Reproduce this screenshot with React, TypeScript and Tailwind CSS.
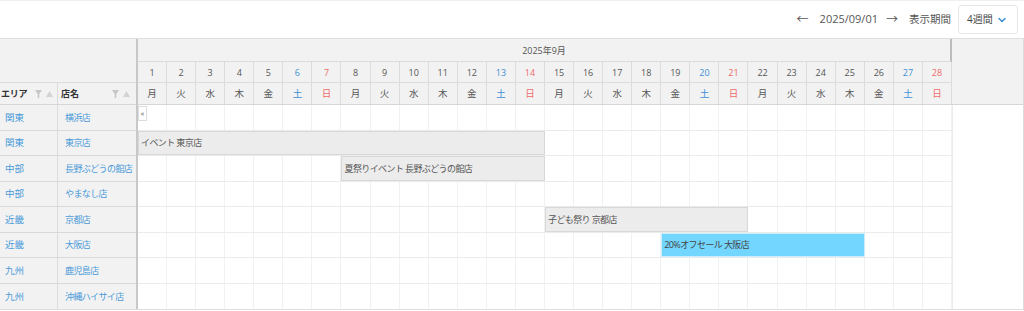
import { ChevronDown } from 'lucide-react'

const weekdays = ['月', '火', '水', '木', '金', '土', '日']
const days = Array.from({ length: 28 }, (_, i) => i + 1)

const stores = [
  { area: '関東', name: '横浜店' },
  { area: '関東', name: '東京店' },
  { area: '中部', name: '長野ぶどうの館店' },
  { area: '中部', name: 'やまなし店' },
  { area: '近畿', name: '京都店' },
  { area: '近畿', name: '大阪店' },
  { area: '九州', name: '鹿児島店' },
  { area: '九州', name: '沖縄ハイサイ店' },
]

// events keyed by row index; spans written out so tailwind picks them up
const events: Record<number, { label: string; span: string; tone: string }> = {
  1: { label: 'イベント 東京店', span: 'col-start-1 col-end-15', tone: 'bg-[#ececec] border-[#d8d8d8] text-[#555]' },
  2: { label: '夏祭りイベント 長野ぶどうの館店', span: 'col-start-8 col-end-15', tone: 'bg-[#ececec] border-[#d8d8d8] text-[#555]' },
  4: { label: '子ども祭り 京都店', span: 'col-start-15 col-end-22', tone: 'bg-[#ececec] border-[#d8d8d8] text-[#555]' },
  5: { label: '20%オフセール 大阪店', span: 'col-start-19 col-end-26', tone: 'bg-[#72d6ff] border-[#c8eefc] text-[#444]' },
}

function dayColor(i: number) {
  const w = (i - 1) % 7
  if (w === 5) return 'text-[#3d8fd6]'
  if (w === 6) return 'text-[#f06a6a]'
  return 'text-[#555]'
}

function Funnel() {
  return (
    <svg width="7" height="8" viewBox="0 0 7 8" className="shrink-0">
      <polygon points="0,0 7,0 4.3,4 4.3,8 2.7,8 2.7,4" fill="#c6c6c6" />
    </svg>
  )
}

function SortUp() {
  return (
    <svg width="7" height="6" viewBox="0 0 7 6" className="shrink-0">
      <polygon points="3.5,0 7,6 0,6" fill="#d2d2d2" />
    </svg>
  )
}

export default function App() {
  return (
    <div className="w-[1024px] h-[311px] bg-white border-t border-[#efefef] overflow-hidden font-['Open_Sans','Noto_Sans_CJK_JP',sans-serif]">
      {/* Top bar */}
      <div className="h-[37px] flex items-center justify-end pr-[6px] text-[#555]">
        <span className="text-[12px] mr-[11px]">←</span>
        <span className="text-[11px] mr-[8px]">2025/09/01</span>
        <span className="text-[12px] mr-[11px]">→</span>
        <span className="text-[10.5px] mr-[7px]">表示期間</span>
        <button className="h-[29px] w-[60px] flex items-center justify-between pl-[8px] pr-[9px] border border-[#e6e6e6] rounded-[3px] bg-white text-[10px] text-[#444]">
          4週間
          <ChevronDown size={12} strokeWidth={3} className="text-[#3d8fd6]" />
        </button>
      </div>

      {/* Table */}
      <div className="flex border-t border-b border-[#dedede] text-[9px] leading-none">
        {/* Left pane */}
        <div className="w-[138px] shrink-0 border-r-2 border-[#c8c8c8] bg-[#f2f2f2]">
          <div className="h-[44px] border-b border-[#dcdcdc]" />
          <div className="h-[22px] flex border-b border-[#d6d6d6] font-bold text-[#333]">
            <div className="w-[58px] flex items-center pl-[1px] pr-[4px] border-r border-[#dcdcdc]">
              <span className="flex-1 tracking-[-0.3px]">エリア</span>
              <Funnel />
              <span className="w-[4px]" />
              <SortUp />
            </div>
            <div className="flex-1 flex items-center pl-[3px] pr-[6px]">
              <span className="flex-1">店名</span>
              <Funnel />
              <span className="w-[4px]" />
              <SortUp />
            </div>
          </div>
          {stores.map((s, i) => (
            <div key={i} className="h-[25.5px] flex border-b border-[#d8d8d8] text-[#4a9ad9] last:border-b-0">
              <div className="w-[58px] flex items-center pl-[5px] border-r border-[#dcdcdc] text-[9.5px]">{s.area}</div>
              <div className="flex-1 flex items-center pl-[7px] whitespace-nowrap tracking-[-0.6px]">{s.name}</div>
            </div>
          ))}
        </div>

        {/* Calendar pane */}
        <div className="flex-1 flex flex-col">
          <div className="flex bg-[#f2f2f2]">
            <div className="w-[814px] shrink-0">
              <div className="h-[23px] flex items-center justify-center border-b border-r-2 border-[#dcdcdc] border-r-[#bdbdbd] text-[#555]">
                2025年9月
              </div>
              <div className="grid grid-cols-28 h-[21px] border-b border-[#dcdcdc]">
                {days.map((d) => (
                  <div key={d} className={`flex items-center justify-center border-r border-[#dcdcdc] ${dayColor(d)}`}>
                    {d}
                  </div>
                ))}
              </div>
              <div className="grid grid-cols-28 h-[22px] border-b border-[#d6d6d6] text-[9.5px]">
                {days.map((d) => (
                  <div key={d} className={`flex items-center justify-center border-r border-[#dcdcdc] ${dayColor(d)}`}>
                    {weekdays[(d - 1) % 7]}
                  </div>
                ))}
              </div>
            </div>
            <div className="flex-1 border-r border-b border-[#dcdcdc] border-b-[#d6d6d6]" />
          </div>

          <div className="flex">
            <div className="w-[814px] shrink-0">
              {stores.map((_, r) => {
                const ev = events[r]
                return (
                  <div key={r} className="grid grid-cols-28 h-[25.5px] border-b border-[#ebebeb] last:border-b-0">
                    {days.map((d) => (
                      <div key={d} className="row-start-1 border-r border-[#f1f1f1]" style={{ gridColumnStart: d }} />
                    ))}
                    {ev && (
                      <div className={`row-start-1 ${ev.span} ${ev.tone} border flex items-center pl-[2px] whitespace-nowrap overflow-hidden tracking-[-0.6px]`}>
                        {ev.label}
                      </div>
                    )}
                    {r === 0 && (
                      <div className="row-start-1 col-start-1 self-start mt-[1px] w-[9px] h-[15px] flex items-center justify-center bg-white border border-[#dcdcdc] text-[7px] text-[#555]">
                        «
                      </div>
                    )}
                  </div>
                )
              })}
            </div>
            <div className="flex-1 border-l border-r border-[#ececec] border-r-[#dcdcdc]" />
          </div>
        </div>
      </div>
    </div>
  )
}
